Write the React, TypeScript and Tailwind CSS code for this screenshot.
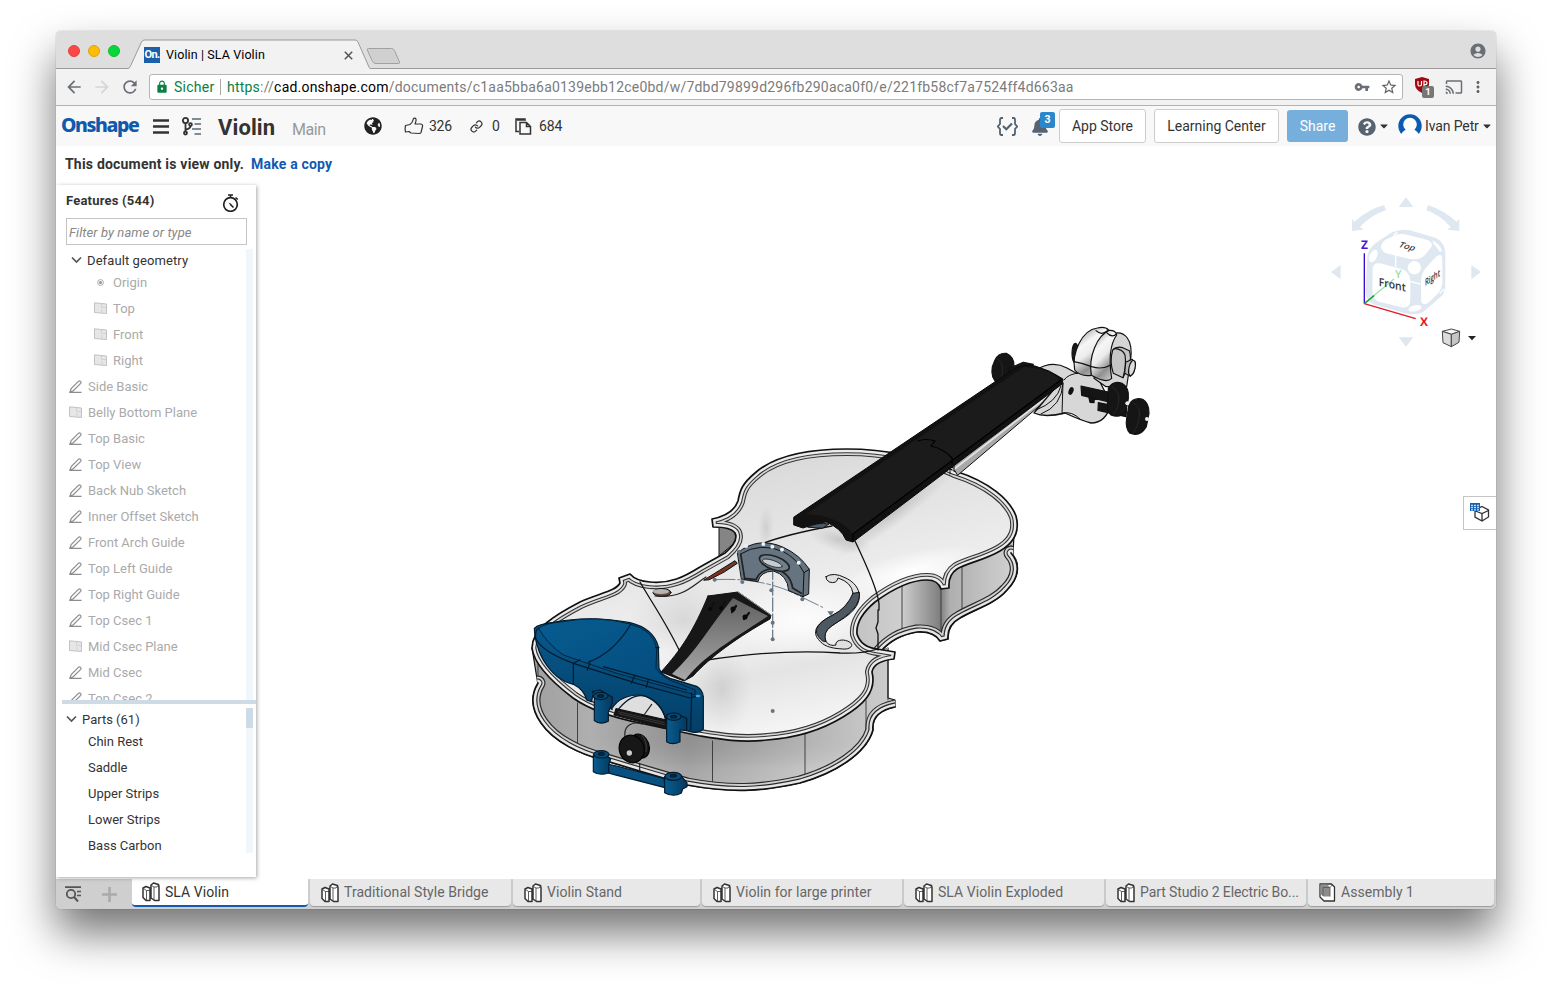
import React from "react";
import { MdAccountCircle, MdArrowBack, MdArrowForward, MdCast, MdLock, MdMoreVert, MdRefresh, MdStarBorder, MdVpnKey } from "react-icons/md";
import { FaBell, FaCaretDown, FaGlobeAmericas, FaQuestionCircle } from "react-icons/fa";
import { Link } from "lucide-react";

function TabStrip() {
  return (
    <div className="flex h-[38px] items-start border-b border-[#999] bg-[#dedede] font-['Roboto',sans-serif]">
      <div className="flex gap-2 pl-3 pt-[14px]">
        <span className="size-3 rounded-full border border-[#e2403d] bg-[#fc4747]" />
        <span className="size-3 rounded-full border border-[#e0a10f] bg-[#fdbd05]" />
        <span className="size-3 rounded-full border border-[#14b82e] bg-[#04d83c]" />
      </div>
      <div className="relative ml-2 mt-2 h-[30px] w-[242px]">
        <svg className="absolute inset-0" width="242" height="30" viewBox="0 0 242 30">
          <path d="M0 30V29.5Q1 29.5 2 27L13.5 3Q14.5 1 16.5 1H227Q229 1 230 3L241 28Q241.500 29.500 242 29.500V30Z" fill="#f2f2f2" />
          <path d="M0 29.500Q1.500 29.500 2.500 27L13.500 3Q14.500 1 16.500 1H227Q229 1 230 3L240.500 27Q241.500 29.500 242 29.500" fill="none" stroke="#999" />
        </svg>
        <div className="relative flex h-[30px] items-center pl-4 pt-[2px]">
          <span className="flex h-4 w-4 items-center justify-center overflow-hidden bg-[#1b5faa] text-[11px] font-bold tracking-[-0.6px] text-white">On.</span>
          <span className="ml-[6px] text-[12.5px] tracking-[0.1px] text-black">Violin | SLA Violin</span>
          <svg className="ml-auto mr-[17px]" width="9" height="9" viewBox="0 0 9 9"><path d="M.8.8 8.200 8.200M8.200.8.8 8.200" stroke="#555" strokeWidth="1.500" /></svg>
        </div>
      </div>
      <svg className="-ml-1 mt-[17px]" width="35" height="17" viewBox="0 0 35 17">
        <path d="M2.500.5H25.500Q27.500.5 28.500 2.500L33.500 14Q34 15.500 32.500 15.500H10Q7.500 15.500 6.500 13.500L1.300 2Q.8.5 2.500.5Z" fill="#d0d0d0" stroke="#a0a0a0" />
      </svg>
      <MdAccountCircle className="ml-auto mr-[9px] mt-[11px] size-[18px] text-[#6a6f75]" />
    </div>
  );
}

function AddressBar() {
  return (
    <div className="flex h-[37px] items-center border-b border-[#b2b2b2] bg-[#f2f2f2] font-['Roboto',sans-serif]">
      <MdArrowBack className="ml-[8px] size-5 text-[#6b6f75]" />
      <MdArrowForward className="ml-2 size-5 text-[#d5d5d5]" />
      <MdRefresh className="ml-2 size-5 text-[#6b6f75]" />
      <div className="ml-[9px] flex h-[26px] w-[1254px] items-center rounded-[3px] border border-[#b5b5b5] bg-white text-[14px]">
        <MdLock className="ml-[5px] size-[14px] text-[#0b8043]" />
        <span className="ml-[5px] w-[41px] tracking-[0.25px] text-[#0b8043]">Sicher</span>
        <span className="ml-[5px] h-4 w-px bg-[#a9a9a9]" />
        <span className="ml-[6px] whitespace-nowrap tracking-[0.213px] text-[#7b7b7b]">
          <span className="text-[#0b8043]">https</span>://<span className="text-black">cad.onshape.com</span>/documents/c1aa5bba6a0139ebb12ce0bd/w/7dbd79899d296fb290aca0f0/e/221fb58cf7a7524ff4d663aa
        </span>
        <MdVpnKey className="ml-auto size-4 text-[#6a6f75]" />
        <MdStarBorder className="ml-[10px] mr-[4px] size-[18px] text-[#5f6368]" />
      </div>
      <div className="relative ml-3 h-5 w-5">
        <svg width="15" height="17" viewBox="0 0 15 17"><path d="M7 0 14 2V7Q14 13 7 16Q0 13 0 7V2Z" fill="#a00812" /><path d="M3 4V8Q3 9 5 9Q6.500 9 6.500 7V4M9 9V4Q12 4 12 6T9 7.500" fill="none" stroke="#fff" strokeWidth="1.200" /></svg>
        <span className="absolute left-[7px] top-[9px] flex h-[12px] w-[12px] items-center justify-center rounded-[2px] bg-[#777] text-[9.5px] font-bold text-white">1</span>
      </div>
      <MdCast className="ml-[10px] size-[18px] text-[#6a6f75]" />
      <MdMoreVert className="ml-[6px] size-[18px] text-[#5f6368]" />
    </div>
  );
}

function Header() {
  return (
    <div className="flex h-10 items-center bg-[#f8f8f8] text-[14px] text-[#333]">
      <span className="ml-[5px] mt-[-3px] w-[79px] font-['Noto_Sans',sans-serif] text-[19.5px] font-extrabold leading-6 tracking-[-1.4px] text-[#1159ab]">Onshape</span>
      <svg className="ml-[13px]" width="16" height="15" viewBox="0 0 16 15"><path d="M0 1.500H16M0 7.500H16M0 13.500H16" stroke="#333" strokeWidth="2.600" /></svg>
      <svg className="ml-3 mt-px" width="21" height="19" viewBox="0 0 21 19">
        <g fill="none" stroke="#333" strokeWidth="1.800"><circle cx="4.500" cy="3.500" r="2.600" /><circle cx="4.500" cy="16" r="1.500" /><circle cx="9.500" cy="7.500" r="1.400" /><path d="M4.500 6V14.500M9.500 9Q9.500 11.500 4.800 12.500" /></g>
        <path d="M11 2H20M13.500 7H20M11 12H20M13.500 17H20" stroke="#546a75" strokeWidth="1.700" />
      </svg>
      <span className="ml-4 mt-[3px] w-[58px] text-[22px] font-bold leading-6 tracking-[0.1px]">Violin</span>
      <span className="ml-4 mt-[8px] w-9 text-[16px] leading-5 tracking-[-0.4px] text-[#999]">Main</span>
      <FaGlobeAmericas className="ml-[36px] size-[18px] text-[#222]" />
      <svg className="ml-[22px]" width="20" height="18" viewBox="0 0 20 18"><path d="M1.500 8.500 6 7.500Q9 5 9.500 1.500Q11 .5 12 2Q12.500 4 11 7H17Q19 7.500 18.500 9.500L17 15.500Q16.500 16.500 15 16.500L7 16 5 14.500 1.500 15Q.7 12 1.500 8.500Z" fill="none" stroke="#333" strokeWidth="1.200" strokeLinejoin="round" /></svg>
      <span className="ml-[5px] w-[24px] tracking-[-0.3px]">326</span>
      <Link className="ml-[17px] size-[13px] text-[#333]" strokeWidth={2.2} />
      <span className="ml-[9px] w-[8px]">0</span>
      <svg className="ml-[15px]" width="17" height="17" viewBox="0 0 17 17"><path d="M4 13.500H1V1H10V3M5 4.500H11.500L15.500 8.500V16H5ZM11.500 4.500V8.500H15.500M2 2H9" fill="none" stroke="#333" strokeWidth="1.500" /></svg>
      <span className="ml-[7px] tracking-[-0.1px]">684</span>
      <svg className="ml-auto" width="21" height="19" viewBox="0 0 21 19"><path d="M6 1H4.500Q3 1 3 3V7L.8 9.500 3 12V16Q3 18 4.500 18H6M15 1H16.500Q18 1 18 3V7L20.200 9.500 18 12V16Q18 18 16.500 18H15" fill="none" stroke="#546270" strokeWidth="1.800" /><path d="M6 9 9.300 12.200 15 6.500" fill="none" stroke="#546270" strokeWidth="2.200" /></svg>
      <div className="relative ml-[13px] h-[34px] w-[26px]">
        <FaBell className="mt-[9px] size-[18px] text-[#566370]" />
        <span className="absolute left-[9px] top-[3px] flex h-[16px] w-[15px] items-center justify-center rounded-[2px] bg-[#2c87ca] text-[10.5px] font-bold text-white">3</span>
      </div>
      <div className="ml-[2px] flex h-[34px] w-[87px] items-center justify-center rounded-[3px] border border-[#ccc] bg-white">App Store</div>
      <div className="ml-2 flex h-[34px] w-[125px] items-center justify-center rounded-[3px] border border-[#ccc] bg-white">Learning Center</div>
      <div className="ml-2 flex h-8 w-[61px] items-center justify-center rounded-[3px] bg-[#76afdc] text-white">Share</div>
      <FaQuestionCircle className="ml-[10px] mt-px size-[18px] text-[#566370]" />
      <FaCaretDown className="ml-[2px] h-[12px] w-[12px] text-[#333]" />
      <svg className="ml-[8px]" width="24" height="24" viewBox="0 0 24 24"><circle cx="12" cy="12" r="11.700" fill="#0d5bb1" /><circle cx="12" cy="10.500" r="6.800" fill="#fff" /><path d="M2 24Q3 17 9 15.500H15Q21 17 22 24Z" fill="#fff" /></svg>
      <span className="ml-[3px] w-[55px] whitespace-nowrap tracking-[-0.12px]">Ivan Petr</span>
      <FaCaretDown className="ml-[1px] mr-[3px] h-[12px] w-[12px] text-[#333]" />
    </div>
  );
}

function PlaneIcon() {
  return <svg className="-mt-[3px]" width="13" height="12" viewBox="0 0 13 12"><path d="M.5.8 12.500 2V11.500L.5 10.500Z" fill="#e6e6e6" stroke="#c2c2c2" /><path d="M7.500 2V5.500H12M8 11V7" fill="none" stroke="#d2d2d2" /></svg>;
}
function SketchIcon() {
  return <svg className="-mt-[2px]" width="13" height="13" viewBox="0 0 13 13"><path d="M1 12 2.200 8.600 9.600 1.200Q10.600.5 11.500 1.400T11.700 3.300L4.300 10.700ZM1 12.300H12.500" fill="none" stroke="#8d8d8d" strokeWidth="1.200" /></svg>;
}
function OriginIcon() {
  return <svg className="-mt-[2px]" width="7" height="7" viewBox="0 0 7 7"><circle cx="3.500" cy="3.500" r="2.900" fill="none" stroke="#aaa" /><circle cx="3.500" cy="3.500" r="1.600" fill="#999" /></svg>;
}
function Chevron() {
  return <svg className="-mt-[2px]" width="11" height="8" viewBox="0 0 11 8"><path d="M1 1.500 5.500 6 10 1.500" fill="none" stroke="#555" strokeWidth="1.700" /></svg>;
}

const features: [string, string][] = [
  ["sketch", "Side Basic"], ["plane", "Belly Bottom Plane"], ["sketch", "Top Basic"], ["sketch", "Top View"],
  ["sketch", "Back Nub Sketch"], ["sketch", "Inner Offset Sketch"], ["sketch", "Front Arch Guide"], ["sketch", "Top Left Guide"],
  ["sketch", "Top Right Guide"], ["sketch", "Top Csec 1"], ["plane", "Mid Csec Plane"], ["sketch", "Mid Csec"], ["sketch", "Top Csec 2"],
];

function Sidebar() {
  return (
    <div className="z-10 mt-px flex h-[692px] w-[200px] shrink-0 flex-col bg-white text-[13px] text-[#333] shadow-[1px_1px_4px_rgba(0,0,0,0.35)]">
      <div className="flex h-[33px] items-center justify-between pl-[10px] pr-[17px]">
        <span className="-mt-[2px] text-[13px] font-bold tracking-[0.2px]">Features (544)</span>
        <svg className="mt-[2px]" width="17" height="18" viewBox="0 0 17 18"><circle cx="8.500" cy="10.500" r="6.800" fill="none" stroke="#222" strokeWidth="1.700" /><path d="M6 1H11M8.500 1V4M13.500 3.500 15.800 5.500M8.500 10.500 11.500 13.500" stroke="#222" strokeWidth="1.600" /><path d="M6.500 8.500 9.500 10 8.500 11.500Z" fill="#222" /></svg>
      </div>
      <div className="ml-[10px] flex h-[27px] w-[181px] items-center border border-[#c4c4c4] pl-[2px] pt-[2px] text-[13px] italic tracking-[0.08px] text-[#888]">Filter by name or type</div>
      <div className="mt-[4px] flex h-[451px] overflow-hidden">
        <div className="w-[190px] pt-px text-[#aaa]">
          <div className="flex h-5 items-center gap-[5px] pl-[15px] pt-[2px] tracking-[0.1px] text-[#333]"><Chevron />Default geometry</div>
          {["Origin", "Top", "Front", "Right"].map((n) => (
            <div key={n} className="flex h-[26px] items-center pl-[38px]">
              <span className="flex w-[13px] justify-center">{n === "Origin" ? <OriginIcon /> : <PlaneIcon />}</span>
              <span className="ml-[6px]">{n}</span>
            </div>
          ))}
          {features.map(([k, n]) => (
            <div key={n} className="flex h-[26px] items-center pl-[13px]">
              {k === "plane" ? <PlaneIcon /> : <SketchIcon />}
              <span className="ml-[6px]">{n}</span>
            </div>
          ))}
        </div>
        <div className="w-[7px] bg-[#f1f6fa]" />
      </div>
      <div className="ml-[6px] h-1 shrink-0 bg-[#cddbe6]" />
      <div className="flex h-[149px] pt-[4px]">
        <div className="w-[190px] pt-px">
          <div className="flex h-[20px] items-center gap-[5px] pl-[10px] pt-[2px]"><Chevron />Parts (61)</div>
          {["Chin Rest", "Saddle", "Upper Strips", "Lower Strips", "Bass Carbon"].map((n) => (
            <div key={n} className="flex h-[26px] items-center pl-[32px]">{n}</div>
          ))}
        </div>
        <div className="w-[7px] bg-[#f1f6fa]"><div className="h-5 rounded-[1px] bg-[#cddbe6]" /></div>
      </div>
    </div>
  );
}

const TOP = "M712 519 Q733 515 738 501 C740 490 742 484 755 473 C773 457 805 449 847 449 C885 449 925 457 955 471 C990 482 1010 500 1016 516 C1020 531 1014 543 1000 551 C985 560 967 563 957 569 Q948 575 949 588 L941 589 Q938 580 927 580 C908 580 890 591 875 602 C862 613 856 624 857 634 Q861 647 877 649 L895 652 L894 659 Q874 661 872 672 C877 692 863 705 843 717 C820 731 795 738 767 740 C741 743 718 739 700 736 L640 723 C610 717 590 710 573 698 C552 682 534 665 532 648 C532 629 555 615 580 602 C600 593 616 591 620 583 L619 578 L630 574 Q636 581 650 582 C670 584 684 577 700 567 L725 553 Q739 541 735 533 Q731 527 713 527 Z";
const SIDE = "M532 648 L538 685 C530 696 532 710 541 723 C554 742 580 754 603 760 L643 772 L687 785 C730 793 760 792 800 783 C835 773 866 754 873 730 Q871 712 895 707 L895 700 L888 698 L888 648 L880 652 C890 641 900 635 917 632 Q934 631 940 641 L948 639 Q947 625 960 618 C975 609 995 604 1007 590 C1021 576 1019 562 1013 555 L1014 534 L900 500 L650 600Z";
const BOTTOM_EDGE = "M538 683 C530 696 532 710 541 723 C554 742 580 754 603 760 L643 772 L687 785 C730 793 760 792 800 783 C835 773 866 754 873 730 Q871 712 895 707 M880 652 C890 641 900 635 917 632 Q934 631 940 641 L948 639 Q947 625 960 618 C975 609 995 604 1007 590 C1021 576 1019 562 1011 553";

function Violin() {
  return (
    <g strokeLinejoin="round" strokeLinecap="round">
      <defs>
        <linearGradient id="side" gradientUnits="userSpaceOnUse" x1="532" y1="0" x2="1018" y2="0">
          <stop offset="0" stopColor="#a8a8a8" /><stop offset=".12" stopColor="#b8b8b8" /><stop offset=".32" stopColor="#979797" /><stop offset=".5" stopColor="#b2b2b2" /><stop offset=".7" stopColor="#d2d2d2" /><stop offset=".76" stopColor="#dadada" /><stop offset=".84" stopColor="#858585" /><stop offset=".86" stopColor="#b8b8b8" /><stop offset="1" stopColor="#dedede" />
        </linearGradient>
        <linearGradient id="sideFade" gradientUnits="userSpaceOnUse" x1="0" y1="735" x2="0" y2="790">
          <stop offset="0" stopColor="#000" stopOpacity=".05" /><stop offset=".6" stopColor="#fff" stopOpacity=".12" /><stop offset="1" stopColor="#fff" stopOpacity=".22" />
        </linearGradient>
        <linearGradient id="plate" gradientUnits="userSpaceOnUse" x1="740" y1="460" x2="800" y2="740">
          <stop offset="0" stopColor="#d9d9d9" /><stop offset=".3" stopColor="#e5e5e5" /><stop offset=".6" stopColor="#f2f2f2" /><stop offset=".75" stopColor="#e4e4e4" /><stop offset="1" stopColor="#f8f8f8" />
        </linearGradient>
        <radialGradient id="shine"><stop offset="0" stopColor="#fff" /><stop offset="1" stopColor="#fff" stopOpacity="0" /></radialGradient>
        <radialGradient id="dim"><stop offset="0" stopColor="#888" stopOpacity=".55" /><stop offset="1" stopColor="#999" stopOpacity="0" /></radialGradient>
        <linearGradient id="blueSide" x1="0" y1="0" x2="0" y2="1"><stop offset="0" stopColor="#085a8e" /><stop offset="1" stopColor="#033f68" /></linearGradient>
        <linearGradient id="blueTop" x1="0" y1="0" x2="1" y2="1"><stop offset="0" stopColor="#075c90" /><stop offset="1" stopColor="#04497a" /></linearGradient>
        <linearGradient id="tail" x1="0" y1="0" x2="0" y2="1"><stop offset="0" stopColor="#606060" /><stop offset="1" stopColor="#a8a8a8" /></linearGradient>
        <linearGradient id="scroll" x1=".25" y1="0" x2=".75" y2="1"><stop offset="0" stopColor="#9c9c9c" /><stop offset=".3" stopColor="#f6f6f6" /><stop offset=".5" stopColor="#ececec" /><stop offset=".75" stopColor="#8f8f8f" /><stop offset="1" stopColor="#c9c9c9" /></linearGradient>
        <linearGradient id="post" x1="0" y1="0" x2="1" y2="0"><stop offset="0" stopColor="#0a5c90" /><stop offset="1" stopColor="#033a60" /></linearGradient>
        <clipPath id="topClip"><path d={TOP} /></clipPath>
        <clipPath id="sideClip"><path d={SIDE} /></clipPath>
      </defs>

      <path d={SIDE} fill="url(#side)" stroke="#111" strokeWidth="1.200" />
      <path d={SIDE} fill="url(#sideFade)" />
      <path d="M719 527V556L738 540V529Z" fill="#858585" stroke="#111" />
      <path d="M902 585V634M941 588V633M962 567V613M1011 545V560M888 655V700M866 700V745M805 733V782M712.500 741V785M577.500 703V746M538 660V688" fill="none" stroke="#333" strokeWidth=".9" />
      <g fill="none" clipPath="url(#sideClip)">
        <path d={BOTTOM_EDGE} stroke="#2b2b2b" strokeWidth="15" />
        <path d={BOTTOM_EDGE} stroke="#cfcfcf" strokeWidth="12.600" />
        <path d={BOTTOM_EDGE} stroke="#2b2b2b" strokeWidth="9" />
        <path d={BOTTOM_EDGE} stroke="#e6e6e6" strokeWidth="6.600" />
      </g>
      <path d={BOTTOM_EDGE} fill="none" stroke="#111" strokeWidth="1.700" />

      <path d={TOP} fill="url(#plate)" />
      <g clipPath="url(#topClip)">
        <ellipse cx="910" cy="572" rx="75" ry="20" fill="url(#shine)" transform="rotate(-14 910 572)" />
        <ellipse cx="800" cy="620" rx="70" ry="40" fill="url(#shine)" opacity=".8" />
        <ellipse cx="766" cy="528" rx="8" ry="22" fill="url(#dim)" opacity=".4" />
        <ellipse cx="895" cy="512" rx="75" ry="12" fill="url(#dim)" opacity=".6" transform="rotate(-37 895 512)" />
        <ellipse cx="840" cy="540" rx="32" ry="12" fill="url(#dim)" opacity=".6" transform="rotate(15 840 540)" />
        <ellipse cx="685" cy="620" rx="55" ry="40" fill="url(#dim)" opacity=".4" />
        <ellipse cx="722" cy="690" rx="30" ry="45" fill="url(#dim)" opacity=".4" />
        <g fill="none">
          <path d={TOP} stroke="#333" strokeWidth="14" />
          <path d={TOP} stroke="#d6d6d6" strokeWidth="11.800" />
          <path d={TOP} stroke="#333" strokeWidth="8.600" />
          <path d={TOP} stroke="#ebebeb" strokeWidth="6.400" />
        </g>
      </g>
      <path d={TOP} fill="none" stroke="#111" strokeWidth="1.700" />
      <path d="M761 544C785 535 810 530 832 526M855 541C865 562 878 590 879 604V610M878 610V622L876 628 878 634V650M640 582C652 603 667 624 680 652M707 660C760 652 800 650 840 653Q862 654 878 649" fill="none" stroke="#111" strokeWidth="1.300" />

      <g transform="translate(700 430) scale(.33333)" stroke="#111" strokeWidth="3">
        <path d="M378 440Q400 425 435 443C478 462 488 500 468 530C450 558 420 570 395 588Q365 605 378 635Q390 650 408 645C404 631 430 624 450 637C463 647 450 659 428 657C390 655 370 648 355 628C335 604 352 578 395 557C430 540 455 515 459 490Q455 457 414 444Q410 463 388 456Q376 450 378 440Z" fill="#e0e0e0" />
        <path d="M459 490 478 487C482 535 430 563 395 588Q367 607 378 635L368 633C330 603 355 578 399 555Q440 535 459 490Z" fill="#4c5963" />
        <path d="M12 450Q60 420 105 392L112 400Q75 428 28 449Z" fill="#6b3a30" />
        <path d="M20 447 80 412 60 432Z" fill="#8a2a12" stroke="none" />
        <path d="M45 449Q170 442 270 484L368 532" fill="none" stroke="#71808b" strokeWidth="3" strokeDasharray="60 8 12 8" />
        <path d="M218 360V627" fill="none" stroke="#71808b" strokeWidth="4" strokeDasharray="40 8" />
        <path d="M113 368Q175 318 250 352 300 375 328 418L326 492 309 500 266 482Q263 435 220 423 180 425 174 455L125 447Z" fill="#657480" />
        <path d="M122 372Q180 335 250 365 290 385 312 428L309 500M312 428 328 418" fill="none" />
        <path d="M122 372 134 445 168 449Q180 418 220 416 270 425 278 474L304 490" fill="none" stroke="#222" strokeWidth="5" />
        <ellipse cx="223" cy="399" rx="47" ry="20" transform="rotate(20 223 399)" fill="#6f7f8c" stroke="#222" strokeWidth="5" />
        <ellipse cx="217" cy="400" rx="31" ry="9" transform="rotate(18 217 400)" fill="#c7ccd0" strokeWidth="2" />
        <g fill="#e9f2f8" stroke="none"><circle cx="138" cy="348" r="6" /><circle cx="190" cy="342" r="6" /><circle cx="217" cy="350" r="6" /><circle cx="246" cy="359" r="6" /><circle cx="296" cy="398" r="6" /></g>
        <g fill="#647682" stroke="none"><circle cx="117" cy="365" r="6" /><circle cx="44" cy="449" r="6" /><circle cx="127" cy="456" r="6" /><circle cx="214" cy="481" r="6" /><circle cx="307" cy="508" r="6" /><circle cx="218" cy="578" r="6" /><circle cx="218" cy="628" r="6" /><circle cx="218" cy="843" r="6" /><path d="M382 544H402L392 558Z" /></g>
      </g>
      <ellipse cx="662" cy="592.500" rx="9" ry="4" fill="#6b4a42" stroke="#111" />
      <ellipse cx="661" cy="591.500" rx="8" ry="2.400" fill="#b5b5b5" />
      <path d="M655 596C683 599 693 585 706 577" fill="none" stroke="#222" strokeWidth="1.200" />

      <path d="M708 596 738 592 771 615 770 619C738 637 710 657 693 676L684 681 661 672C681 650 694 630 708 596Z" fill="#171717" stroke="#111" />
      <path d="M733 598 768 616C738 636 704 655 685 680L672 674C696 652 710 626 733 598Z" fill="url(#tail)" />
      <path d="M738 592 771 615" stroke="#aaa" strokeWidth=".8" />
      <g stroke="#111" strokeWidth="2.300"><path d="M710 609 714 603M721 609 725 602M732 612 736 606M744 619 749 613" /></g>
      <g fill="#090909"><circle cx="710" cy="609" r="2" /><circle cx="721" cy="608" r="2" /><circle cx="733" cy="609" r="2.500" /><circle cx="745" cy="617" r="2.500" /></g>

      <path d="M952 466 1063 380 1063 386 958 475Z" fill="#a9a9a9" stroke="#111" />
      <path d="M953 470 1061 386" stroke="#e4e4e4" strokeWidth="1.600" />
      <path d="M950 458V474M954 456V471" stroke="#111" />
      <path d="M1036 370Q1052 360 1067 368L1076 373Q1096 370 1102 386L1111 404Q1106 423 1091 423 1080 420 1065 413 1045 418 1034 413L1060 382Z" fill="#d7d7d7" stroke="#111" strokeWidth="1.300" />
      <path d="M1063 383Q1062 406 1041 414M1063 383 1062 414M1063 413Q1072 411 1080 419M1064 380Q1068 374 1079 373M1036 410Q1057 402 1061 386" fill="none" stroke="#111" />
      <ellipse cx="1071" cy="391" rx="2.400" ry="4" fill="#111" transform="rotate(20 1071 391)" />

      <g transform="translate(970 310) scale(.33333)" stroke="#111" strokeWidth="3.500">
        <ellipse cx="316" cy="130" rx="10" ry="30" fill="#1a1a1a" />
        <path d="M425 72C465 58 490 90 482 150L470 230 408 230 372 205Z" fill="#d5d5d5" />
        <path d="M314 180C305 130 335 60 382 54Q405 48 416 60C385 90 360 140 364 196Q330 200 314 180Z" fill="url(#scroll)" />
        <path d="M364 196C355 140 380 78 418 61Q437 60 440 75C415 110 418 160 425 205Q410 222 364 196Z" fill="url(#scroll)" />
        <path d="M312 155Q340 160 365 170 395 180 423 165M378 62Q395 78 412 62M410 68Q425 85 440 72" fill="none" />
        <path d="M428 120Q440 108 458 113L478 122Q486 145 476 165L459 203 430 190Q418 155 428 120Z" fill="#c5c5c5" />
        <path d="M432 115Q460 118 465 135 470 165 459 203" fill="none" />
        <path d="M467 157 487 148Q500 163 492 185L481 199 464 190Z" fill="#b9b9b9" /><ellipse cx="486" cy="174" rx="9" ry="23" fill="#ddd" transform="rotate(13 486 174)" />
        <g fill="#151515"><path d="M75 150Q85 128 109 130 134 142 132 170L123 205Q111 228 83 220 61 204 67 170Z" /><path d="M118 175 160 157 190 163 180 185 115 205Z" />
          <path d="M333 228 415 246 410 274 335 256ZM356 260 373 265 372 278 360 277ZM385 278 470 295 468 320 384 301Z" />
          <path d="M415 235Q430 210 456 220 478 232 475 265L468 305Q450 326 423 315 408 300 413 270Z" />
          <path d="M477 284Q492 260 518 268 538 280 537 310L529 350Q510 382 480 370 465 355 470 325Z" /></g>
        <path d="M425 230Q445 240 447 265 445 300 430 312M488 278Q508 286 509 310 505 350 490 368M80 145Q100 155 98 185 95 205 85 215" fill="none" stroke="#303030" strokeWidth="2" />
        <g fill="#eee" stroke="none"><circle cx="472" cy="280" r="6" /><circle cx="531" cy="327" r="6" /></g>
      </g>

      <path d="M794 517 1011 371Q1022 363 1035 366 1050 370 1063 379L1062 384 853 542 846 540Q841 528 826 522 812 524 803 528L794 525Z" fill="#121212" stroke="#0a0a0a" />
      <path d="M806 514 1024 367Q1048 368 1060 380L853 534Q840 516 806 514Z" fill="#1b1b1b" />
      <path d="M918 441Q926 438 935 441L931 446Q944 449 952 458V464M853 534V541M853 534 1061 380" fill="none" stroke="#000" strokeWidth="1.200" />
      <path d="M808 527Q818 522 829 524L823 528Z" fill="#4c5a65" stroke="#111" />

      <g transform="translate(520 560) scale(.33333)" stroke="#021a2c" strokeWidth="3.500">
        <path d="M276 443Q325 400 390 415 430 440 440 490L285 465Z" fill="#dedede" stroke="none" />
        <path d="M288 446 440 480 436 505 282 465Z" fill="#151515" stroke="#111" />
        <path d="M295 455 433 488M297 461 433 494" stroke="#484848" strokeWidth="2" />
        <path d="M372 465 395 433M315 530C310 490 345 485 365 492M359 610V633" fill="none" stroke="#222" />
        <path d="M43 205Q55 192 100 187 210 165 330 188 400 205 415 260L417 325Q425 350 470 361L530 379Q548 390 550 410V507Q535 522 510 515L480 505V473L437 478Q420 415 360 405 300 405 275 447L262 420 220 395 215 425 200 420Q193 390 160 373 105 360 70 300 43 250 43 205Z" fill="url(#blueSide)" />
        <path d="M56 205Q70 190 130 185 230 165 330 192 400 210 410 265L408 325Q430 357 475 370L525 390 525 405 490 395 290 340 130 285Q80 250 56 205Z" fill="url(#blueTop)" strokeWidth="2.500" />
        <path d="M56 205Q45 210 47 235 65 275 160 310L350 370 510 414 527 410M333 192Q280 280 205 306M180 299 160 310V373M210 308 202 330M345 345 334 370M385 358 379 382M515 398 512 510M407 263H417M250 320 500 390" fill="none" />
        <path d="M290 455Q330 400 375 408 425 430 437 478" fill="none" strokeWidth="4" />
        <ellipse cx="534" cy="408" rx="7" ry="4" fill="#39a7dc" stroke="none" />
        <path d="M223 400V482Q240 496 265 484V455L277 430V412L240 390 217 395Z" fill="url(#post)" /><ellipse cx="242" cy="408" rx="22" ry="11" fill="#0a4c78" />
        <path d="M440 465V545Q457 557 480 545V510L500 512V475L465 460Z" fill="url(#post)" /><ellipse cx="461" cy="470" rx="22" ry="11" fill="#0a4c78" />
        <path d="M262 612 290 618 432 655 435 683 280 643 262 638Z" fill="#07507f" />
        <path d="M220 585V635Q240 649 266 638V615L272 597 245 574Z" fill="url(#post)" /><ellipse cx="244" cy="583" rx="23" ry="11" fill="#0a4c78" />
        <path d="M434 650V698Q460 713 484 699L488 687 501 680V668L480 645Z" fill="url(#post)" /><ellipse cx="460" cy="649" rx="25" ry="12" fill="#0a4c78" />
        <g fill="#032f4e" stroke="#021b2e"><ellipse cx="242" cy="408" rx="9" ry="4" /><ellipse cx="461" cy="470" rx="9" ry="4" /><ellipse cx="244" cy="582" rx="9" ry="4" /><ellipse cx="460" cy="647" rx="9" ry="4" /></g>
        <ellipse cx="360" cy="558" rx="27" ry="37" fill="#161616" stroke="#000" transform="rotate(-20 360 558)" />
        <path d="M366 526Q383 545 378 575" fill="none" stroke="#555" strokeWidth="2" />
        <ellipse cx="335" cy="567" rx="37" ry="42" fill="#171717" stroke="#000" transform="rotate(-20 335 567)" />
        <circle cx="328" cy="579" r="8" fill="#ccc" stroke="none" />
      </g>
    </g>
  );
}

function ViewCube() {
  return (
    <g transform="translate(1310 185) scale(.33333)">
      <g fill="#dfe8f0">
        <path d="M266 66H310L288 37ZM266 457H310L288 485ZM92 240V283L63 261ZM484 240V283L513 261Z" />
        <path d="M126 102 133 110Q175 73 222 60L228 75Q185 90 150 125L160 134 126 138ZM354 60Q400 75 440 110L448 102V138L412 134 422 126Q390 90 349 76Z" />
        <path d="M246 142Q275 130 300 136L380 160Q405 175 406 205V310L398 330 340 380Q320 392 290 386L190 358Q165 345 167 315L172 215Q175 190 200 172Z" />
      </g>
      <path d="M262 141 250 151M257 205V245M300 290 332 297M370 172 392 200M389 325 403 312" stroke="#fff" strokeWidth="4" />
      <g fill="#fff">
        <path d="M213 186Q214 172 230 163L258 149Q270 146 284 148L345 163Q370 170 365 185L345 210Q330 226 300 222L240 208Q214 202 213 186Z" />
        <path d="M188 250Q190 232 210 235L272 251Q300 260 301 285V345Q301 371 275 367L210 351Q186 344 187 320Z" />
        <path d="M333 285Q335 262 350 246L377 216Q397 200 397 225V290Q397 310 382 328L355 353Q333 367 333 340Z" />
        <circle cx="313" cy="248" r="20" /><ellipse cx="190" cy="213" rx="11" ry="20" transform="rotate(25 190 213)" /><ellipse cx="315" cy="370" rx="20" ry="9" transform="rotate(-12 315 370)" /><path d="M366 165Q392 178 397 200Q383 193 366 165Z" />
      </g>
      <g fill="none" strokeWidth="4"><path d="M163 205V356" stroke="#3b09d6" /><path d="M163 356 317 401" stroke="#e51625" /><path d="M163 356 193 331" stroke="#18a333" strokeWidth="4.500" /><path d="M193 331 252 282" stroke="#9be3ac" /></g>
      <g className="font-['Open_Sans',sans-serif]" fontWeight="600" textRendering="geometricPrecision" opacity=".99">
        <text x="153" y="193" fill="#4b10e0" fontWeight="700" fontSize="36">Z</text><text x="330" y="423" fill="#e51625" fontWeight="700" fontSize="36">X</text><text x="255" y="279" fill="#98e0a9" fontSize="33">Y</text>
        <text transform="matrix(.92 .2 0 1 206 302)" fill="#333" fontSize="34">Front</text>
        <text transform="matrix(.85 .23 -.5 .68 263 185)" fill="#333" fontSize="31">Top</text>
        <text transform="matrix(.6 -.42 0 1 345 304)" fill="#333" fontSize="30">Right</text>
      </g>
      <g stroke="#444" strokeWidth="3" strokeLinejoin="round"><path d="M397 439 424 432 449 439 424 448Z" fill="#f5f5f5" /><path d="M397 439 424 448V485L399 473Z" fill="#dcdcdc" /><path d="M424 448 449 439 447 472 424 485Z" fill="#c5c5c5" /></g>
      <path d="M474 453H498L486 466Z" fill="#222" />
    </g>
  );
}

function Viewport() {
  return (
    <div className="relative h-[695px] w-[1240px] bg-white">
      <svg width="1240" height="695" viewBox="256 184 1240 695"><Violin /><ViewCube /></svg>
      <div className="absolute right-0 top-[312px] flex h-[34px] w-[33px] items-center justify-center border border-r-0 border-[#c5c5c5] bg-white">
        <svg width="20" height="20" viewBox="0 0 20 20"><path d="M12 3.500 18.500 7V14L12 18 5 14V7ZM5.500 8 12 10.500 18.500 7.500M12 10.500V18" fill="none" stroke="#333" strokeWidth="1.300" /><rect width="10" height="8" fill="#1660b3" /><path d="M1 2.500H9M1 4.700H9M1 6.900H9" stroke="#b6def7" strokeWidth="1.300" strokeDasharray="2 1" /></svg>
      </div>
    </div>
  );
}

function PartIcon() {
  return <svg className="shrink-0" width="19" height="20" viewBox="0 0 19 20"><g fill="#fff" stroke="#333" strokeWidth="1.500" strokeLinejoin="round"><path d="M1 6 4 4.500 8 6V18.500H4L1 15.500ZM9 3 11.500 1 16.500 2.500 17 5V18.500H12.500L9 16Z" /></g><path d="M1.500 6.500 4.500 8.500H8M4.500 8.500V18M9.500 3.500 12 5H15L16.500 3M12 5V18" fill="none" stroke="#333" strokeWidth=".8" /></svg>;
}
function AssemblyIcon() {
  return <svg className="shrink-0" width="18" height="19" viewBox="0 0 18 19"><path d="M1 1H12.500L15.500 4V18H5L1 14Z" fill="#fff" stroke="#333" strokeWidth="1.300" strokeLinejoin="round" /><path d="M1.500 1.500H8.500L11 4.500V13.500H4.500L1.500 11Z" fill="#8c8c8c" /><path d="M4 4.500H11V13.500M11 4.500 13 2M4 4.500V13" stroke="#555" fill="none" strokeWidth=".8" /></svg>;
}

function BottomTabs() {
  const tab = "flex h-[27px] shrink-0 items-center gap-1 rounded-b-[4px] bg-[#e8e8e8] pl-[11px] whitespace-nowrap text-[#666] shadow-[0_1px_1px_rgba(0,0,0,0.25)]";
  return (
    <div className="flex h-[30px] items-start gap-[2px] bg-[#cfcfcf] text-[14px] tracking-[0.05px]">
      <div className="flex h-[30px] w-[74px] items-center">
        <svg className="ml-[9px]" width="17" height="16" viewBox="0 0 17 16"><path d="M0 1.200H16M12 5.500H16M12 9.500H16" stroke="#555" strokeWidth="1.700" /><circle cx="6" cy="8" r="4.200" fill="none" stroke="#555" strokeWidth="1.800" /><path d="M9 11 13 15.500" stroke="#555" strokeWidth="2" /></svg>
        <svg className="ml-5" width="15" height="15" viewBox="0 0 15 15"><path d="M7.500 0V15M0 7.500H15" stroke="#aaa" strokeWidth="2.600" /></svg>
      </div>
      <div className="flex h-7 w-[176px] shrink-0 items-center gap-1 rounded-b-[4px] border-b-2 border-[#1159b3] bg-white pl-[10px] text-[#333]"><PartIcon />SLA Violin</div>
      <div className={`${tab} w-[201px]`}><PartIcon />Traditional Style Bridge</div>
      <div className={`${tab} w-[187px]`}><PartIcon />Violin Stand</div>
      <div className={`${tab} w-[200px]`}><PartIcon />Violin for large printer</div>
      <div className={`${tab} w-[200px]`}><PartIcon />SLA Violin Exploded</div>
      <div className={`${tab} w-[200px] tracking-[-0.1px]`}><PartIcon />Part Studio 2 Electric Bo...</div>
      <div className={`${tab} w-[186px]`}><AssemblyIcon />Assembly 1</div>
    </div>
  );
}

export default function App() {
  return (
    <div className="h-[989px] w-[1552px] overflow-hidden bg-white px-14 pt-[31px] font-['Roboto',sans-serif]">
      <div className="flex h-[878px] w-[1440px] flex-col overflow-hidden rounded-[5px] bg-white shadow-[0_0_1px_rgba(0,0,0,0.5),0_24px_44px_rgba(0,0,0,0.55)]">
        <TabStrip />
        <AddressBar />
        <Header />
        <div className="flex h-[38px] items-center pb-[2px] pl-[9px] text-[14px] font-bold tracking-[0.2px] text-[#333]">
          This document is view only.<span className="ml-[7px] text-[#1159b3]">Make a copy</span>
        </div>
        <div className="flex h-[695px]"><Sidebar /><Viewport /></div>
        <BottomTabs />
      </div>
    </div>
  );
}
